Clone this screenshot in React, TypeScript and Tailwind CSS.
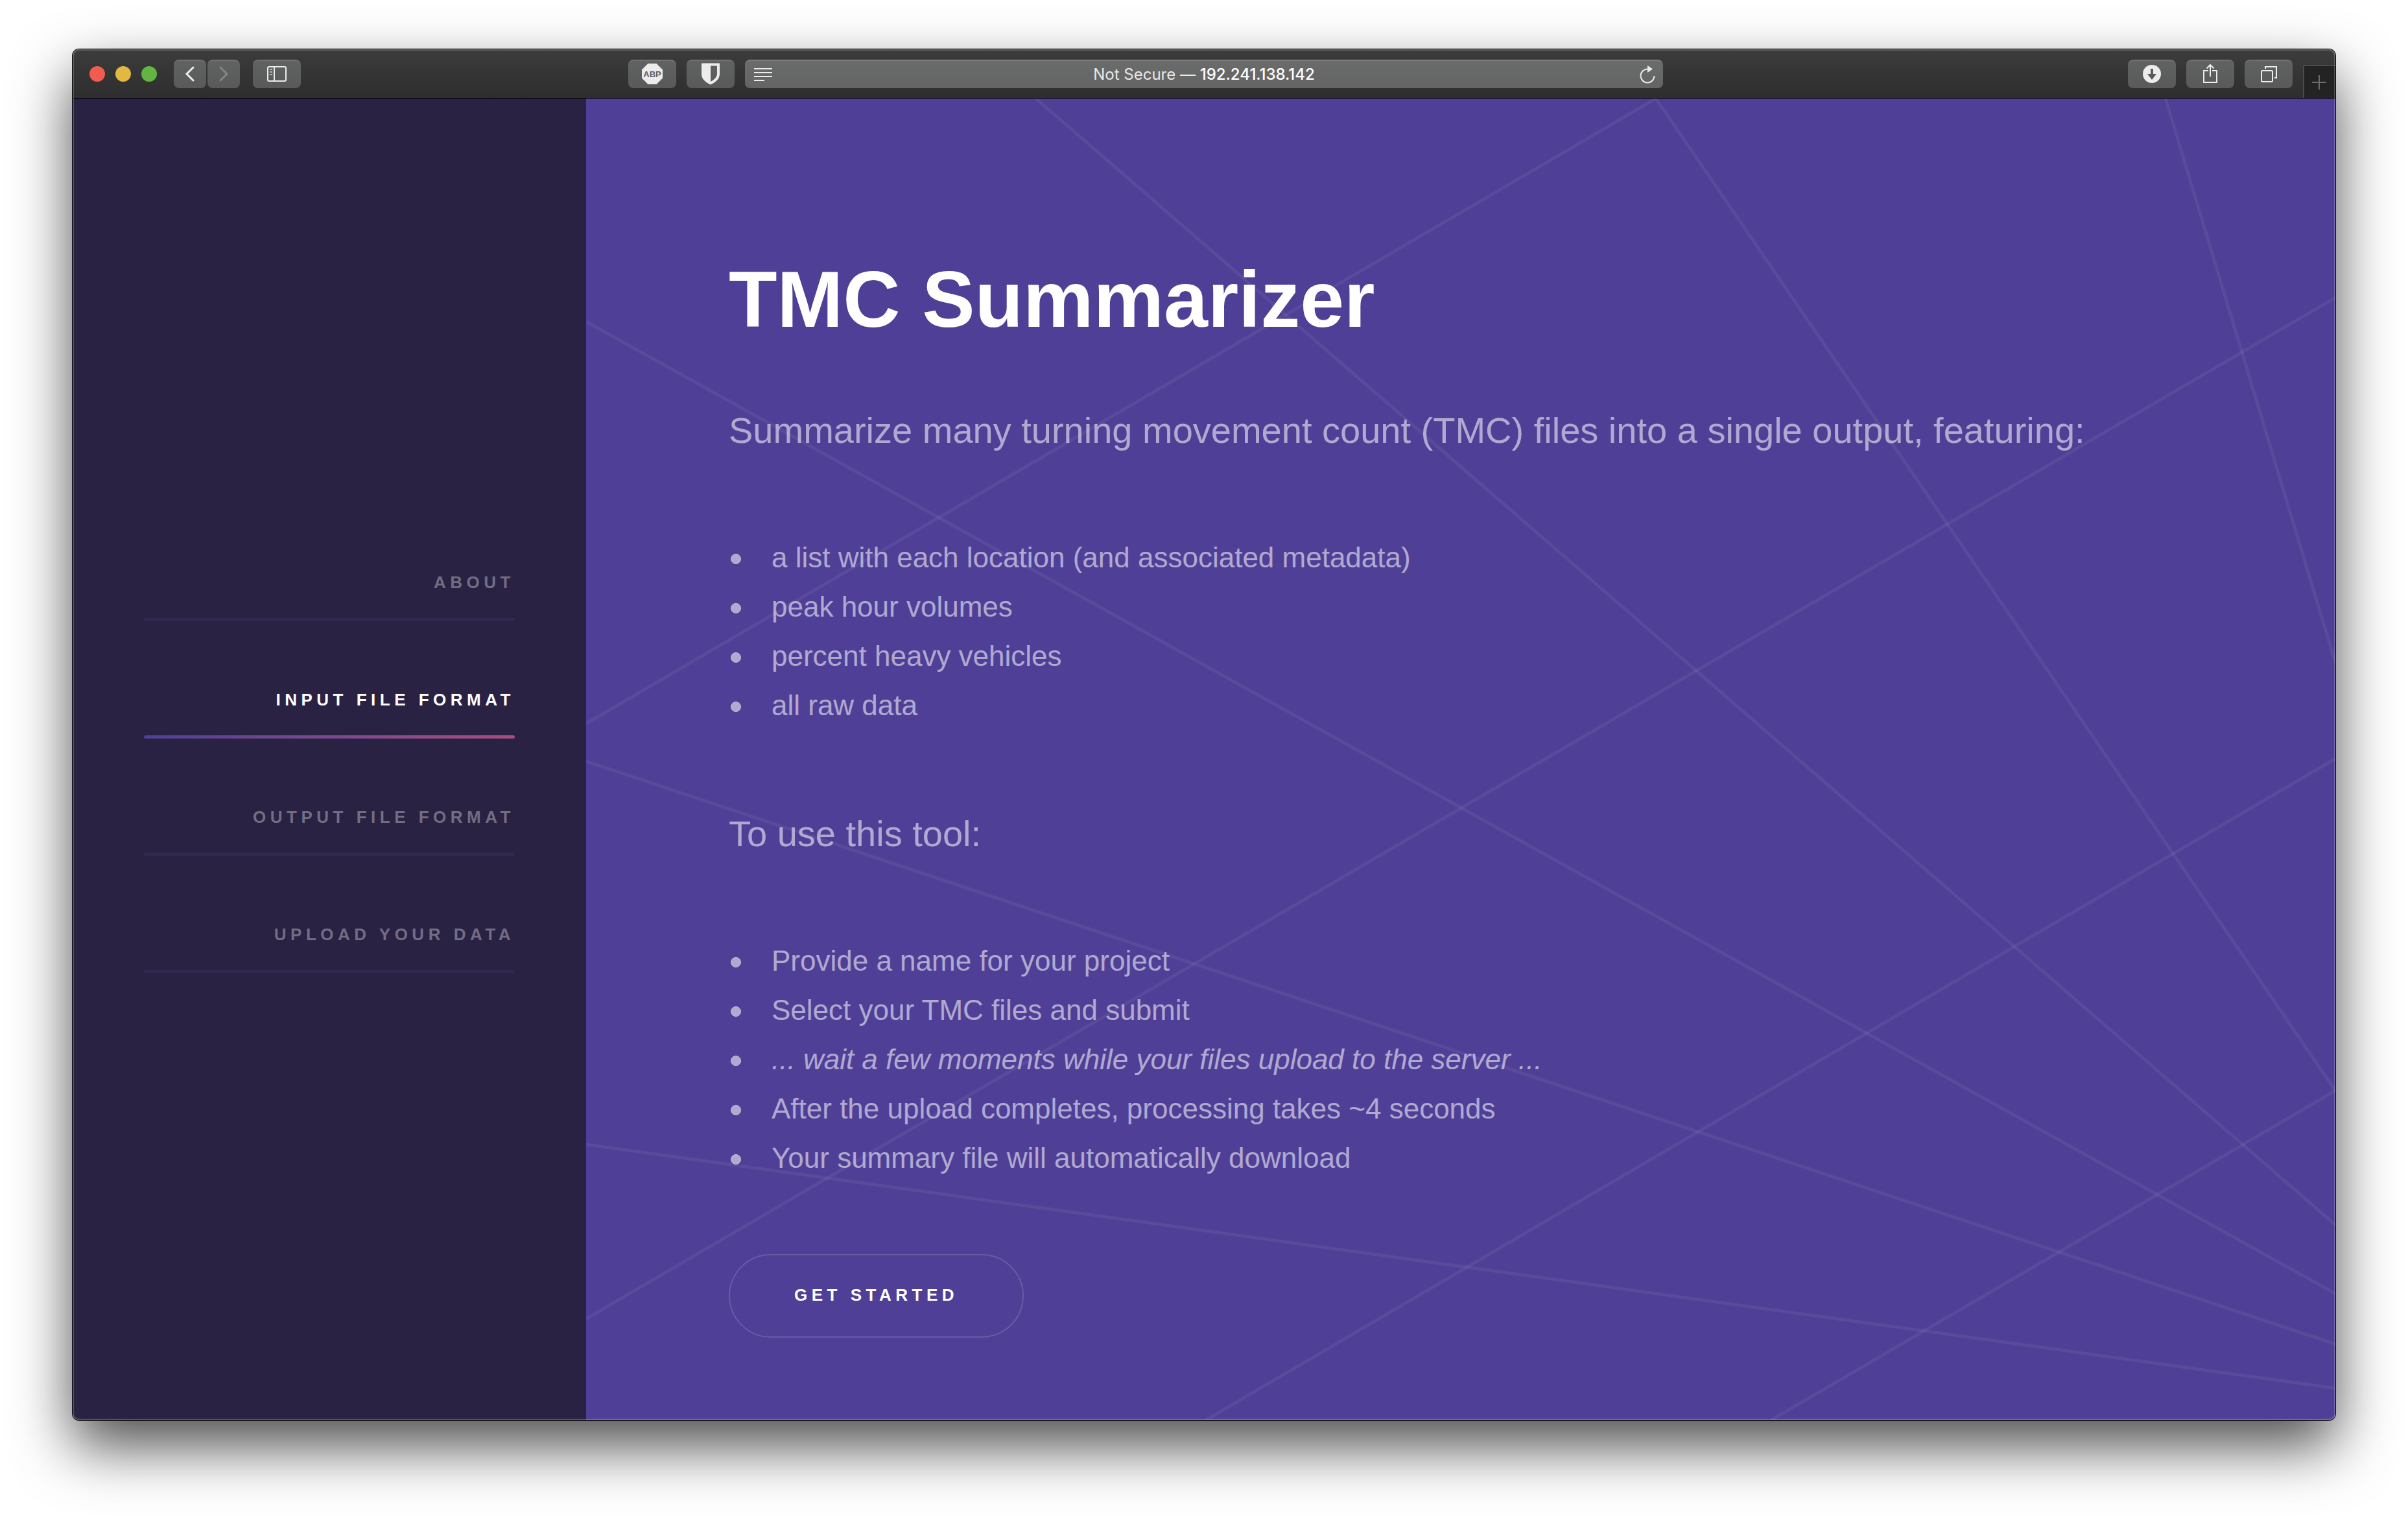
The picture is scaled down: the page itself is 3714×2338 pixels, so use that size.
import type { ReactNode } from "react";

const navItems = [
  { label: "About", href: "#about" },
  { label: "Input file format", href: "#input", active: true },
  { label: "Output file format", href: "#output" },
  { label: "Upload your data", href: "#upload" },
];

const features = [
  "a list with each location (and associated metadata)",
  "peak hour volumes",
  "percent heavy vehicles",
  "all raw data",
];

const steps: ReactNode[] = [
  "Provide a name for your project",
  "Select your TMC files and submit",
  <em>... wait a few moments while your files upload to the server ...</em>,
  "After the upload completes, processing takes ~4 seconds",
  "Your summary file will automatically download",
];

function ToolButton({ label, narrow, children }: { label: string; narrow?: boolean; children: ReactNode }) {
  return (
    <button
      type="button"
      aria-label={label}
      className={
        "h-11 shrink-0 rounded-lg border-t-2 border-[#707171] bg-gradient-to-b from-[#616262] to-[#585959] " +
        (narrow ? "w-[50px]" : "w-[74px]")
      }
    >
      <svg
        viewBox={narrow ? "0 2 50 42" : "0 2 74 42"}
        className="block h-[42px] w-full"
        fill="none"
        stroke="#ececec"
        strokeWidth="2"
      >
        {children}
      </svg>
    </button>
  );
}

function Toolbar() {
  return (
    <header className="flex h-[76px] shrink-0 items-center border-b border-black bg-gradient-to-b from-[#3b3c3b] to-[#2d2e2d] pl-[26px]">
      <div className="flex shrink-0 gap-4">
        <button type="button" aria-label="Close" className="size-6 rounded-full bg-[#f25b50]" />
        <button type="button" aria-label="Minimize" className="size-6 rounded-full bg-[#e0b843]" />
        <button type="button" aria-label="Zoom" className="size-6 rounded-full bg-[#61b540]" />
      </div>
      <div className="ml-[26px] flex shrink-0 gap-0.5">
        <ToolButton label="Back" narrow>
          <path d="M30 12 20 22l10 10" strokeWidth="3" strokeLinecap="round" />
        </ToolButton>
        <ToolButton label="Forward" narrow>
          <path d="m20 12 10 10-10 10" stroke="#858585" strokeWidth="3" strokeLinecap="round" />
        </ToolButton>
      </div>
      <div className="ml-5 flex shrink-0">
        <ToolButton label="Show sidebar">
          <rect x="23" y="11" width="28" height="22" rx="2" />
          <path d="M33 11v22" />
          <path d="M26 15h4M26 19h4M26 23h4" stroke="#b5b5b5" />
        </ToolButton>
      </div>
      <div className="flex-[505]" />
      <div className="mr-4 flex shrink-0 gap-4">
        <ToolButton label="Adblock Plus">
          <path d="M30.500 6h13L53 15.500v13L43.500 38h-13L21 28.500v-13z" fill="#ececec" stroke="none" />
          <text
            x="37"
            y="27"
            textAnchor="middle"
            fill="#5c5d5d"
            stroke="none"
            fontFamily="Liberation Sans, sans-serif"
            fontWeight="700"
            fontSize="13"
          >
            ABP
          </text>
        </ToolButton>
        <ToolButton label="Bitwarden">
          <path
            fillRule="evenodd"
            fill="#ececec"
            stroke="none"
            d="M24 5.500h26a1 1 0 0 1 1 1V22c0 7-5 12.500-14 16.500C28 34.500 23 29 23 22V6.500a1 1 0 0 1 1-1zM37 9.500V34c6.500-3.500 10-7.500 10-12.500v-12z"
          />
        </ToolButton>
      </div>
      <div className="relative flex h-11 flex-[1416] items-center justify-center rounded-lg border-t-2 border-[#7d7e7e] bg-gradient-to-b from-[#6a6b6b] to-[#646464] font-[Inter,sans-serif] text-[24px] text-[#e8e8e8]">
        <button type="button" aria-label="Reader view" className="absolute left-3.5 top-1/2 -translate-y-1/2">
          <svg viewBox="0 0 28 22" className="block h-[22px] w-7" stroke="#ececec" strokeWidth="2">
            <path d="M0 2h28M0 8h28M0 14h28M0 20h16" />
          </svg>
        </button>
        <span>
          Not Secure — <span className="font-medium text-white">192.241.138.142</span>
        </span>
        <button type="button" aria-label="Reload" className="absolute right-3 top-1/2 -translate-y-1/2">
          <svg viewBox="0 0 24 28" className="block h-7 w-6" fill="none" stroke="#ececec" strokeWidth="2">
            <path d="M13 5.500A10.500 10.500 0 1 0 22.500 16" />
            <path d="M12 0v11l8-5.500z" fill="#ececec" stroke="none" />
          </svg>
        </button>
      </div>
      <div className="flex-[717]" />
      <div className="flex shrink-0 gap-4">
        <ToolButton label="Downloads">
          <circle cx="37" cy="22" r="14" fill="#ececec" stroke="none" />
          <path d="M35 14h4v8h5l-7 9-7-9h5z" fill="#585959" stroke="none" />
        </ToolButton>
        <ToolButton label="Share">
          <path d="M34 17h-7v18h20V17h-7M37 26V8M31.500 13.500 37 8l5.500 5.500" />
        </ToolButton>
        <ToolButton label="Show all tabs">
          <rect x="26" y="17" width="17" height="17" rx="1.500" />
          <path d="M32 14v-3h17v17h-3" />
        </ToolButton>
      </div>
      <button
        type="button"
        aria-label="New tab"
        className="ml-4 h-[51px] w-[50px] shrink-0 self-end border-l-2 border-t-2 border-[#4a4b4b] bg-[#222322]"
      >
        <svg viewBox="0 0 48 49" className="block h-[49px] w-12" stroke="#6c6c6c" strokeWidth="2">
          <path d="M12 25h22M23 14v22" />
        </svg>
      </button>
    </header>
  );
}

function BulletList({ items }: { items: ReactNode[] }) {
  return (
    <ul className="mt-[110px] text-[44px] leading-[76px]">
      {items.map((item, i) => (
        <li key={i} className="flex items-center">
          <span className="ml-[3px] mr-[47px] mt-1 size-4 shrink-0 rounded-full border border-[#c6c0dd] bg-[#b0a9d0]" />
          <span>{item}</span>
        </li>
      ))}
    </ul>
  );
}

function Lines() {
  return (
    <svg
      aria-hidden="true"
      viewBox="0 0 2698 2038"
      preserveAspectRatio="none"
      className="absolute inset-0 size-full"
      stroke="#ffffff"
      strokeOpacity="0.06"
      strokeWidth="5"
    >
      <path d="M694 0 2698 1737" />
      <path d="M1650 0 0 964" />
      <path d="M1650 0 2698 1530" />
      <path d="M2436 0 2698 870" />
      <path d="M0 344 2698 1843" />
      <path d="M0 1022 2698 1921" />
      <path d="M0 1613 2698 1989" />
      <path d="M0 1882 2698 307" />
      <path d="M956 2038 2698 1018" />
      <path d="M1828 2038 2698 1530" />
    </svg>
  );
}

export default function App() {
  return (
    <div className="flex min-h-screen flex-col bg-white px-28 pb-[148px] pt-[76px] font-['Liberation_Sans',Arial,sans-serif]">
      <div className="relative flex flex-1 flex-col rounded-[10px] shadow-[0_0_0_1px_#000,0_40px_90px_rgba(0,0,0,0.7)]">
        <div className="flex flex-1 flex-col overflow-hidden rounded-[10px]">
          <Toolbar />
          <div className="flex flex-1">
            <aside className="flex w-[792px] shrink-0 flex-col justify-center bg-[#2a2243] px-[110px]">
              <nav>
                <ul className="flex flex-col gap-16">
                  {navItems.map((item) => (
                    <li key={item.label}>
                      <a
                        href={item.href}
                        className={
                          "block pt-[34px] text-right text-[26px] font-bold uppercase leading-[46px] tracking-[0.25em] " +
                          (item.active ? "text-white" : "text-white/35")
                        }
                      >
                        {item.label}
                        <span
                          className={
                            "mt-8 block h-[5px] rounded-full " +
                            (item.active ? "bg-gradient-to-r from-[#4f3f96] to-[#a84c80]" : "bg-[#322850]")
                          }
                        />
                      </a>
                    </li>
                  ))}
                </ul>
              </nav>
            </aside>
            <main className="relative flex-1 bg-[#4f3f96]">
              <Lines />
              <div className="relative px-[220px] pb-[110px] pt-[220px] text-white/55">
                <h1 className="text-[122px] font-bold leading-[180px] text-white">TMC Summarizer</h1>
                <p className="mt-16 text-[56px] leading-[96px]">
                  Summarize many turning movement count (TMC) files into a single output, featuring:
                </p>
                <BulletList items={features} />
                <p className="mt-[112px] text-[56px] leading-[96px]">To use this tool:</p>
                <BulletList items={steps} />
                <a
                  href="#input"
                  className="mt-[110px] inline-flex h-[129px] items-center rounded-full border-2 border-white/15 px-[99px] pb-1 text-[26px] font-bold uppercase leading-[46px] tracking-[0.25em] text-white"
                >
                  Get started
                </a>
              </div>
            </main>
          </div>
        </div>
        <div className="pointer-events-none absolute inset-0 rounded-[10px] border-2 border-white/20" />
      </div>
    </div>
  );
}
